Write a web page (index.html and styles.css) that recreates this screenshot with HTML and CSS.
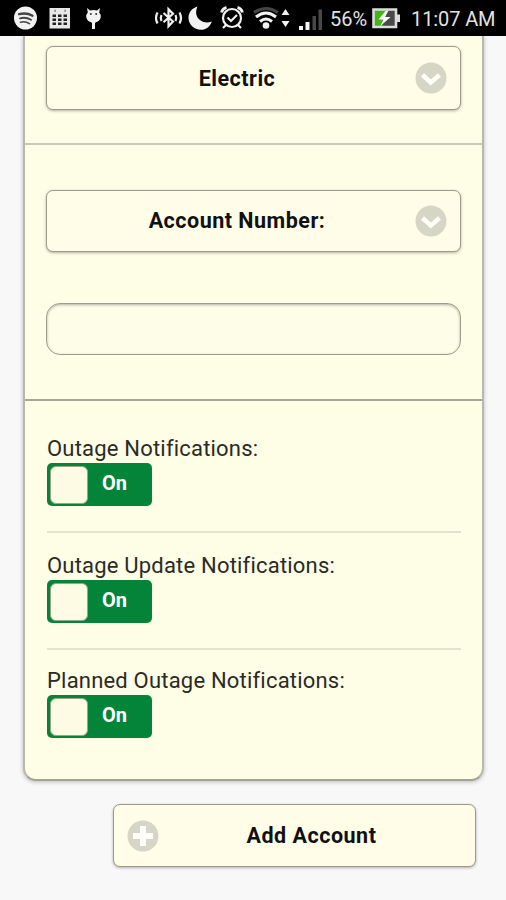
FILE: index.html
```html
<!DOCTYPE html>
<html lang="en">
<head>
<meta charset="utf-8">
<title>Add Account</title>
<link rel="stylesheet" href="styles.css">
</head>
<body>
<header class="status">
  <svg class="status-left" width="120" height="36" viewBox="0 0 120 36">
    <circle cx="25.500" cy="18" r="11.500" fill="#f2f2f2"/>
    <g fill="none" stroke="#444" stroke-linecap="round">
      <path d="M19 14.200q7.500-2 13.500 1.500" stroke-width="2.300"/>
      <path d="M20 18.300q6-1.500 11 1.500" stroke-width="1.900"/>
      <path d="M20.500 22.200q5-1.200 9 1.400" stroke-width="1.600"/>
    </g>
    <path d="M49.500 8h20.500v20.500H49.500z" fill="#e8e8e8"/>
    <g fill="#222">
      <path d="M52.500 14.500h3.500v2.500h-3.500zM58 14.500h3.500v2.500h-3.500zM63.500 14.500h3.500v2.500h-3.500zM52.500 18.500h3.500v2.500h-3.500zM58 18.500h3.500v2.500h-3.500zM63.500 18.500h3.500v2.500h-3.500zM52.500 22.500h3.500v2.500h-3.500zM58 22.500h3.500v2.500h-3.500zM63.500 22.500h3.500v2.500h-3.500z"/>
      <path d="M54.500 9.500h1.200v2.500h-1.200zM64.500 9.500h1.200v2.500h-1.200z" fill="#777"/>
    </g>
    <path d="M87 8l3 2.500q3.500-1 7 0l3-2.500-.8 4.500q2 2 1.500 5-1 4-5.200 4.800v.700h-.5v6h-3v-6h-.5v-.700q-4.200-.8-5.200-4.800-.5-3 1.500-5z" fill="#f2f2f2"/>
    <circle cx="90.800" cy="14" r="1" fill="#333"/><circle cx="96.200" cy="14" r="1" fill="#333"/>
  </svg>
  <svg class="status-icons" width="172" height="36" viewBox="152 0 172 36">
    <g fill="none" stroke="#f0f0f0" stroke-width="2.200">
      <path d="M163.500 13l9.500 8.500-4.500 4.800V9.200l4.500 4.600-9.500 8.500"/>
      <path d="M161.500 15q-1.500 3 0 6M175.500 15q1.500 3 0 6M157.500 12.500q-3 5.500 0 11M179.500 12.500q3 5.500 0 11"/>
    </g>
    <path d="M197.500 6.500C195 12 196 17 200 20S208 23 211.800 21.500C210 27 206 29.800 201 29.800C194 29.800 188.500 24.500 188.500 17.800C188.500 12.500 192 8 197.500 6.500z" fill="#f2f2f2"/>
    <g fill="none" stroke="#f0f0f0" stroke-width="2.200">
      <circle cx="232" cy="18" r="9"/>
      <path d="M227.500 17.500l3.500 3.500 6-6"/>
      <path d="M221.500 12.500q1-4 5-5.200M242.500 12.500q-1-4-5-5.200" stroke-width="2.800"/>
      <path d="M226 25l-3 3M238 25l3 3"/>
    </g>
    <g fill="none">
      <path d="M254 12.500q12-8 24 0" stroke="#444" stroke-width="3"/>
      <path d="M256 17q10-8 20 0M260 21.500q6-5 12 0" stroke="#f2f2f2" stroke-width="3"/>
    </g>
    <circle cx="266" cy="25.500" r="3.300" fill="#f2f2f2"/>
    <path d="M285.500 9l4 6h-8zM285.500 27l4-6h-8z" fill="#f2f2f2"/>
    <path d="M299 26h4v4h-4zM305.500 22h4v8h-4z" fill="#f4f4f4"/>
    <path d="M312.500 16h3.500v14h-3.500zM318.500 9.500h3.500V30h-3.500z" fill="#484848"/>
  </svg>
  <span class="percent">56%</span>
  <svg class="battery" width="30" height="36" viewBox="371 0 30 36">
    <path d="M374 10h21v17h-21z" fill="#4a4a4a"/>
    <path d="M374 10h13l-5 17h-8z" fill="#43b51c"/>
    <path d="M373.500 9.500h22.500v17.500h-22.500z" fill="none" stroke="#ddd" stroke-width="2.600"/>
    <path d="M397 14.500h3v7.500h-3z" fill="#ddd"/>
    <path d="M386 10.500l-7.500 9h5l-3.500 7 10.500-9.500h-5.500l3.500-6.500z" fill="#fff"/>
  </svg>
  <span class="clock">11:07 AM</span>
</header>
<main>
  <div class="card">
    <section class="service">
      <button class="btn select">Electric
        <svg class="icon" width="32" height="32" viewBox="0 0 32 32"><circle cx="16" cy="16" r="15.500" fill="#d6d6c4"/><path d="M7.500 13l8.300 7.500L24.500 13" fill="none" stroke="#fffffa" stroke-width="4.500"/></svg>
      </button>
    </section>
    <section class="account">
      <button class="btn select number">Account Number:
        <svg class="icon" width="32" height="32" viewBox="0 0 32 32"><circle cx="16" cy="16" r="15.500" fill="#d6d6c4"/><path d="M7.500 13l8.300 7.500L24.500 13" fill="none" stroke="#fffffa" stroke-width="4.500"/></svg>
      </button>
      <input class="field" type="text" aria-label="Account Number">
    </section>
    <section class="alerts">
      <div class="alert"><div class="label">Outage Notifications:</div><div class="switch"><i class="knob"></i><b class="state">On</b></div></div>
      <div class="alert"><div class="label">Outage Update Notifications:</div><div class="switch"><i class="knob"></i><b class="state">On</b></div></div>
      <div class="alert"><div class="label">Planned Outage Notifications:</div><div class="switch"><i class="knob"></i><b class="state">On</b></div></div>
    </section>
  </div>
  <button class="btn add">
    <svg class="icon" width="32" height="32" viewBox="0 0 32 32"><circle cx="16" cy="16" r="15.500" fill="#d6d6c8"/><path d="M16 6v20M6 16h20" stroke="#fffffa" stroke-width="6"/></svg>Add Account</button>
</main>
</body>
</html>
```
FILE: styles.css
```css
* { box-sizing: border-box; }
body { margin: 0; height: 900px; overflow: hidden; background: #f8f8f8; font-family: Roboto, "Liberation Sans", sans-serif; color: #111; }
.status { display: flex; height: 36px; background: #000; color: #e2e2e2; line-height: 38px; white-space: nowrap; }
.status svg { flex: none; }
.status-icons { margin-left: 32px; }
.percent { width: 41px; margin-left: 6px; font-size: 20px; }
.clock { margin-left: 10px; font-size: 20px; letter-spacing: -0.1px; }
.card { width: 461px; height: 745px; margin-left: 23px; border: solid; border-width: 0 2px 2px; border-color: #b8b8ab #b8b8ab #a3a395; border-radius: 0 0 13px 13px; background: #fefde5; box-shadow: 0 1px 4px rgba(0, 0, 0, 0.25); }
.service { height: 109px; padding: 10px 21px 0 22px; border-bottom: 2px solid #c9c9b5; }
.account { height: 256px; padding: 45px 21px 0 22px; border-bottom: 2px solid #a8a898; }
.btn { position: relative; display: flex; align-items: center; justify-content: center; width: 415px; height: 64px; margin: 0; border: 1.500px solid #9c9b8a; border-radius: 7px; background: #fffde8; box-shadow: 0 1px 3px rgba(0, 0, 0, 0.3); font: 700 21.500px Roboto, sans-serif; letter-spacing: 0.5px; color: #111; }
.service .btn, .account .btn, .field { margin-left: -1px; }
.select { padding: 0 41px 0 8px; }
.number { height: 62px; padding-bottom: 1px; }
.select .icon { position: absolute; right: 13px; top: 15px; }
.number .icon { top: 14px; }
.field { display: block; width: 415px; height: 52px; margin-top: 51px; border: 1.500px solid #9c9c8b; border-radius: 14px; background: #fefde7; box-shadow: inset 0 1px 3px rgba(0, 0, 0, 0.3); }
.alerts { padding: 32px 21px 0 22px; }
.alert { height: 117px; }
.alert + .alert { height: 115px; }
.alert + .alert:not(:last-child)::after { margin-top: 25px; }
.alert:not(:last-child)::after { content: ""; display: block; height: 2px; margin-top: 25px; background: #e2e2cf; }
.label { height: 30px; line-height: 31px; font-size: 22px; letter-spacing: 0.2px; color: #2a2a26; white-space: nowrap; }
.switch { display: flex; align-items: center; width: 105px; height: 43px; padding: 0 3px; border-radius: 5px; background: #048439; }
.knob { width: 38px; height: 38px; border: 1px solid #9aa48a; border-radius: 6px; background: #fefbe5; }
.state { margin: -3px 0 0 14px; font-size: 20px; line-height: 24px; color: #fff; }
.add { width: 363px; height: 63px; margin: 23px 0 0 113px; padding: 0 6px 1px 40px; }
.add .icon { position: absolute; left: 13px; top: 15px; }
```
